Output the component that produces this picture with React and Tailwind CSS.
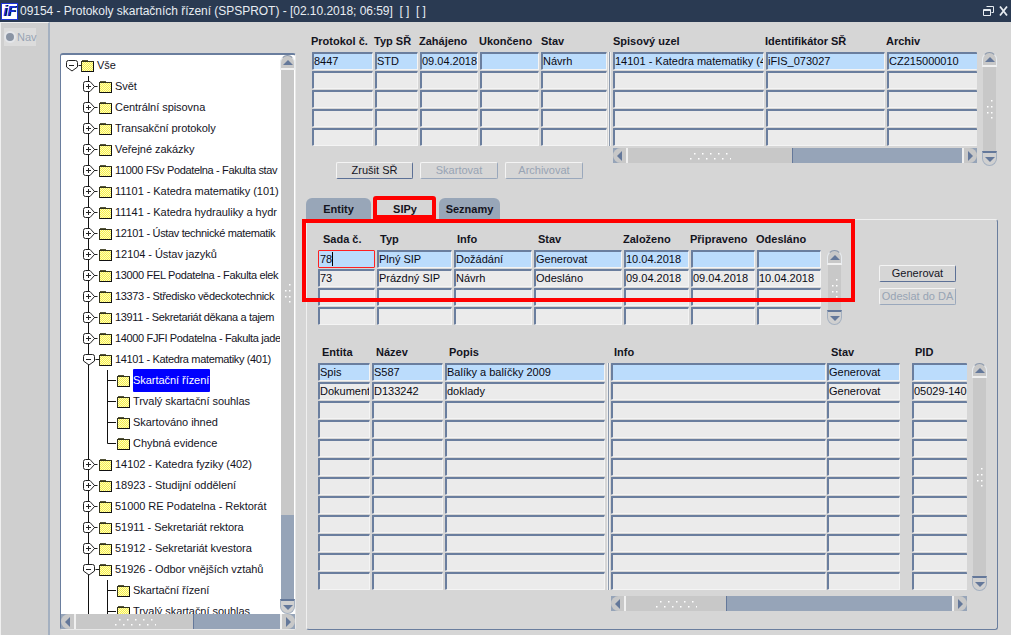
import React from 'react';

const treeRows = [
  { level: 0, state: 'open', label: 'Vše' },
  { level: 1, state: 'closed', label: 'Svět' },
  { level: 1, state: 'closed', label: 'Centrální spisovna' },
  { level: 1, state: 'closed', label: 'Transakční protokoly' },
  { level: 1, state: 'closed', label: 'Veřejné zakázky' },
  { level: 1, state: 'closed', label: '11000 FSv Podatelna - Fakulta stav', tight: true },
  { level: 1, state: 'closed', label: '11101 - Katedra matematiky (101)' },
  { level: 1, state: 'closed', label: '11141 - Katedra hydrauliky a hydr' },
  { level: 1, state: 'closed', label: '12101 - Ústav technické matematik', tight: true },
  { level: 1, state: 'closed', label: '12104 - Ústav jazyků' },
  { level: 1, state: 'closed', label: '13000 FEL Podatelna - Fakulta elek', tight: true },
  { level: 1, state: 'closed', label: '13373 - Středisko vědeckotechnick', tight: true },
  { level: 1, state: 'closed', label: '13911 - Sekretariát děkana a tajem', tight: true },
  { level: 1, state: 'closed', label: '14000 FJFI Podatelna - Fakulta jade', tight: true },
  { level: 1, state: 'open', label: '14101 - Katedra matematiky (401)', tight: true },
  { level: 2, label: 'Skartační řízení', selected: true },
  { level: 2, label: 'Trvalý skartační souhlas' },
  { level: 2, label: 'Skartováno ihned' },
  { level: 2, label: 'Chybná evidence', last: true },
  { level: 1, state: 'closed', label: '14102 - Katedra fyziky (402)' },
  { level: 1, state: 'closed', label: '18923 - Studijní oddělení' },
  { level: 1, state: 'closed', label: '51000 RE Podatelna - Rektorát' },
  { level: 1, state: 'closed', label: '51911 - Sekretariát rektora' },
  { level: 1, state: 'closed', label: '51912 - Sekretariát kvestora' },
  { level: 1, state: 'open', label: '51926 - Odbor vnějších vztahů' },
  { level: 2, label: 'Skartační řízení' },
  { level: 2, label: 'Trvalý skartační souhlas' },
];

const Folder = ({ x }) => (
  <g transform={`translate(${x} 4)`} shapeRendering="crispEdges">
    <path d="M1 1h5v1h6v2H1z" fill="#f2e840" stroke="#55553a" strokeWidth="1" />
    <rect x=".5" y="2.5" width="12" height="9.5" fill="#f4ea3a" stroke="#33331a" strokeWidth="1" />
    <rect x="1" y="3" width="11" height="8.5" fill="url(#dither)" />
    <path d="M12.5 3v9.5H1" fill="none" stroke="#111" strokeWidth="1.4" />
  </g>
);

const Node = ({ x, open }) => (
  <g fill="#fff" stroke="#222" strokeWidth="1">
    {open ? (
      <path d={`M${x + 0.5} 7.5q0-2 2-2h7q2 0 2 2v4.5l-5.5 4-5.5-4z`} />
    ) : (
      <path d={`M${x + 0.5} 7.5q0-2 2-2h4.5l4.5 5-4.5 5h-4.5q-2 0-2-2z`} />
    )}
    <path d={`M${x + 3} 10.5h5`} fill="none" />
    {!open && <path d={`M${x + 5.5} 8v5`} fill="none" />}
    <path d={`M${x + (open ? 12.5 : 11)} 10.5h3.5`} fill="none" />
  </g>
);

// tree lines + folder are one small drawing per row
const TreeGlyph = ({ row }) => {
  const w = row.level === 0 ? 36 : row.level === 1 ? 54 : 72;
  return (
    <svg width={w} height="21" className="shrink-0">
      <defs>
        <pattern id="dither" width="2" height="2" patternUnits="userSpaceOnUse">
          <rect width="2" height="2" fill="#f6f04a" />
          <rect width="1" height="1" fill="#fffcc0" />
          <rect x="1" y="1" width="1" height="1" fill="#fffcc0" />
        </pattern>
      </defs>
      {row.level > 0 && <path d="M27.5 0v21" stroke="#111" />}
      {row.level === 0 && <Node x={5} open />}
      {row.level === 0 && <Folder x={20} />}
      {row.level === 1 && <Node x={22} open={row.state === 'open'} />}
      {row.level === 1 && <Folder x={38} />}
      {row.level === 2 && (
        <path d={`M46.5 0V${row.last ? 10.5 : 21}M46.5 10.5H55`} stroke="#111" fill="none" />
      )}
      {row.level === 2 && <Folder x={56} />}
    </svg>
  );
};

const Dots = ({ vertical }) => (
  <svg width={vertical ? 8 : 42} height={vertical ? 20 : 8} className="shrink-0">
    {(vertical
      ? [[5, 1], [1, 7], [5, 7], [1, 13], [5, 13], [5, 18]]
      : [[5, 1], [13, 1], [21, 1], [29, 1], [37, 1], [1, 6], [9, 6], [17, 6], [25, 6], [33, 6], [41, 6]]
    ).map(([x, y], i) => (
      <rect key={i} x={x} y={y} width="1.5" height="1.5" fill="#fff" />
    ))}
  </svg>
);

const VScroll = ({ thumbClass = 'flex-1', track }) => (
  <div className="flex h-full w-[15px] shrink-0 flex-col">
    <div className="flex h-[15px] shrink-0 items-center justify-center rounded-t-[8px] border border-b-2 border-[#e8ecf0] border-t-[#8a98ac] border-b-[#f0f0f0] bg-[#c8c8c8]">
      <div className="h-0 w-0 border-x-[5px] border-b-[5px] border-x-transparent border-b-[#64789a]" />
    </div>
    <div className={`mx-px flex items-center justify-center bg-[#c8c8c8] ${thumbClass}`}>
      <Dots vertical />
    </div>
    {track && <div className="mx-px flex-1 bg-[#96a4b8]" />}
    <div className="flex h-[15px] shrink-0 items-center justify-center rounded-b-[8px] border border-t-2 border-[#a4b0c0] border-t-[#64789a] bg-[#d0d0d0]">
      <div className="h-0 w-0 border-x-[5px] border-t-[5px] border-x-transparent border-t-[#64789a]" />
    </div>
  </div>
);

const HScroll = ({ thumbClass }) => (
  <div className="flex h-[15px] w-full shrink-0 bg-[#96a4b8]">
    <div className="flex w-[15px] shrink-0 items-center justify-center rounded-l-full border-r-2 border-r-[#f0f0f0] bg-[#c8c8c8]">
      <div className="h-0 w-0 border-y-[5px] border-r-[5px] border-y-transparent border-r-[#64789a]" />
    </div>
    <div className={`flex items-center justify-center border-r border-r-[#64789a] bg-[#c8c8c8] ${thumbClass}`}>
      <Dots />
    </div>
    <div className="flex-1" />
    <div className="flex w-[15px] shrink-0 items-center justify-center rounded-r-full border-l-2 border-l-[#f0f0f0] bg-[#c8c8c8]">
      <div className="h-0 w-0 border-y-[5px] border-l-[5px] border-y-transparent border-l-[#64789a]" />
    </div>
  </div>
);

const Field = ({ value, active, focused, open }) => (
  <div
    className={`flex h-[18px] items-center overflow-hidden whitespace-nowrap rounded-[1px] text-[11px] text-[#0a0a14] ${
      focused
        ? 'border border-[#ff2020] pl-px'
        : 'border-t-2 border-l-2 border-b border-t-[#6a7e9e] border-l-[#6a7e9e] border-b-[#f4f4f4]'
    } ${open || focused ? '' : 'border-r border-r-[#f4f4f4]'} ${active ? 'bg-[#bbdcfc]' : 'bg-[#ebebeb]'}`}
  >
    {value}
    {focused && <span className="h-[14px] w-px bg-black" />}
  </div>
);

const Column = ({ className, label, labelClass = '', values = [], rows, open, focused }) => (
  <div className={`flex shrink-0 flex-col ${className}`}>
    <div className={`flex h-[22px] items-center whitespace-nowrap text-[11px] font-bold text-[#14141e] ${labelClass}`}>
      {label}
    </div>
    <div className="flex flex-col gap-px">
      {Array.from({ length: rows }).map((_, i) => (
        <Field key={i} value={values[i]} active={i === 0} open={open} focused={focused && i === 0} />
      ))}
    </div>
  </div>
);

const Divider = ({ className }) => (
  <div className={`w-[3px] shrink-0 border-x border-x-[#f0f0f0] bg-[#8a98ac] ${className}`} />
);

const Btn = ({ children, disabled, className }) => (
  <button
    className={`flex h-[17px] items-center justify-center whitespace-nowrap rounded-[2px] border border-t-[#f4f4f4] border-l-[#f4f4f4] text-[11px] ${
      disabled
        ? 'border-r-[#9aa8bc] border-b-[#9aa8bc] text-[#98a4b4]'
        : 'border-r-[#5c7096] border-b-[#5c7096] text-[#14141e]'
    } ${className}`}
  >
    {children}
  </button>
);

const Tab = ({ children, active, className }) => (
  <div
    className={`flex h-[21px] items-center justify-center rounded-t-[6px] pt-[2px] text-[11px] font-bold text-[#14141e] ${
      active ? 'relative bg-[#d6d6d6]' : 'bg-[#98a6b8]'
    } ${className}`}
  >
    {children}
    {active && (
      <span className="absolute -left-[2px] -right-[1px] -top-[2px] bottom-0 rounded-t-[3px] border-4 border-[#ff0000]" />
    )}
  </div>
);

const Tree = () => (
  <div className="flex h-[577px] w-[236px] shrink-0 flex-col rounded-[3px] border border-t-2 border-[#e8e8e8] border-t-[#6a7e9e] border-l-[#6a7e9e] bg-white">
    <div className="flex min-h-0 flex-1">
      <div className="min-w-0 flex-1 overflow-hidden">
        {treeRows.map((row, i) => (
          <div
            key={i}
            className={`flex h-[21px] items-center whitespace-nowrap text-[11px] text-[#14141e] ${
              row.tight ? 'tracking-[-0.35px]' : 'tracking-[-0.05px]'
            }`}
          >
            <TreeGlyph row={row} />
            <span className={row.selected ? 'rounded-[1px] bg-[#0000ff] py-[3px] pr-px text-white' : ''}>
              {row.label}
            </span>
          </div>
        ))}
      </div>
      <VScroll thumbClass="h-[445px]" track />
    </div>
    <HScroll thumbClass="w-[118px]" />
  </div>
);

const TopGrid = () => (
  <div className="flex pl-[10px] pt-[8px]">
    <div className="flex w-[295px] shrink-0 flex-col">
      <div className="flex gap-[2px]">
        <Column className="w-[61px]" label="Protokol č." labelClass="-ml-px" rows={5} values={['8447']} />
        <Column className="w-[43px]" label="Typ SŘ" labelClass="-ml-px" rows={5} values={['STD']} />
        <Column className="w-[58px]" label="Zahájeno" labelClass="-ml-px" rows={5} values={['09.04.2018']} />
        <Column className="w-[59px]" label="Ukončeno" labelClass="-ml-px" rows={5} />
        <Column className="w-[66px]" label="Stav" rows={5} values={['Návrh']} />
      </div>
      <div className="ml-[24px] mt-[16px] flex gap-[7px]">
        <Btn className="w-[77px]">Zrušit SŘ</Btn>
        <Btn className="w-[78px]" disabled>Skartovat</Btn>
        <Btn className="w-[78px]" disabled>Archivovat</Btn>
      </div>
    </div>
    <Divider className="ml-[1px] mr-[2px] mt-[22px] h-[94px]" />
    <div className="flex w-[364px] shrink-0 flex-col">
      <div className="flex gap-[2px]">
        <Column className="w-[151px]" label="Spisový uzel" rows={5} values={['14101 - Katedra matematiky (4']} />
        <Column className="w-[119px]" label="Identifikátor SŘ" labelClass="-ml-px" rows={5} values={['iFIS_073027']} />
        <Column className="w-[90px]" label="Archiv" labelClass="-ml-px" rows={5} open values={['CZ215000010']} />
      </div>
      <div className="mt-[2px]">
        <HScroll thumbClass="w-[165px]" />
      </div>
    </div>
    <div className="ml-[5px] mt-[22px] h-[114px]">
      <VScroll />
    </div>
  </div>
);

const SipGrid = () => (
  <div className="flex">
    <div className="flex gap-[2px]">
      <Column className="w-[57px]" label="Sada č." labelClass="pl-[5px]" rows={4} focused values={['78', '73']} />
      <Column className="w-[75px]" label="Typ" labelClass="pl-[3px]" rows={4} values={['Plný SIP', 'Prázdný SIP']} />
      <Column className="w-[78px]" label="Info" labelClass="pl-[3px]" rows={4} values={['Dožádání', 'Návrh']} />
      <Column className="w-[88px]" label="Stav" labelClass="pl-[4px]" rows={4} values={['Generovat', 'Odesláno']} />
      <Column className="w-[65px]" label="Založeno" labelClass="-ml-px" rows={4} values={['10.04.2018', '09.04.2018']} />
      <Column className="w-[64px]" label="Připraveno" labelClass="-ml-px" rows={4} values={['', '09.04.2018']} />
      <Column className="w-[64px]" label="Odesláno" labelClass="-ml-px" rows={4} values={['', '10.04.2018']} />
    </div>
    <div className="ml-[6px] mt-[22px] h-[75px]">
      <VScroll />
    </div>
    <div className="ml-[37px] mt-[37px] flex w-[77px] flex-col gap-[6px]">
      <Btn className="w-full">Generovat</Btn>
      <Btn className="w-full" disabled>Odeslat do DA</Btn>
    </div>
  </div>
);

const EntityGrid = () => (
  <div className="mt-[16px] flex">
    <div className="flex gap-[2px]">
      <Column className="w-[52px]" label="Entita" labelClass="pl-[4px]" rows={12} values={['Spis', 'Dokument']} />
      <Column className="w-[71px]" label="Název" labelClass="pl-[4px]" rows={12} values={['S587', 'D133242']} />
      <Column className="w-[160px]" label="Popis" labelClass="pl-[4px]" rows={12} values={['Balíky a balíčky 2009', 'doklady']} />
    </div>
    <Divider className="ml-[2px] mr-[1px] mt-[22px] h-[227px]" />
    <div className="flex w-[356px] shrink-0 flex-col">
      <div className="flex">
        <Column className="w-[215px]" label="Info" labelClass="pl-[3px]" rows={12} />
        <Column className="ml-[1px] w-[73px]" label="Stav" labelClass="pl-[4px]" rows={12} values={['Generovat', 'Generovat']} />
        <Column className="ml-[12px] w-[55px]" label="PID" labelClass="pl-[3px]" rows={12} open values={['', '05029-140']} />
      </div>
      <div className="mt-[6px]">
        <HScroll thumbClass="w-[101px]" />
      </div>
    </div>
    <div className="ml-[5px] mt-[22px] h-[228px]">
      <VScroll />
    </div>
  </div>
);

const RightPane = () => (
  <div className="relative w-[700px] shrink-0">
    <TopGrid />
    <div className="ml-[4px] mt-[19px] flex gap-[4px]">
      <Tab className="w-[65px]">Entity</Tab>
      <Tab className="w-[60px]" active>SIPy</Tab>
      <Tab className="w-[61px]">Seznamy</Tab>
    </div>
    <div className="ml-[4px] h-[411px] w-[692px] rounded-[3px] border border-t-[#f0f0f0] border-l-[#f0f0f0] border-r-[#6a7e9e] border-b-[#6a7e9e] pl-[11px] pt-[8px]">
      <SipGrid />
      <EntityGrid />
    </div>
    {/* red highlight drawn over the screenshot */}
    <div className="pointer-events-none absolute left-0 top-[197px] h-[83px] w-[553px] border-4 border-[#ff0000]" />
  </div>
);

export default function App() {
  return (
    <div className="flex h-[635px] w-[1011px] flex-col overflow-hidden bg-[#d6d6d6] font-['Liberation_Sans',Arial,sans-serif]">
      <header className="flex h-[22px] shrink-0 items-center bg-[#2a3a52] pl-px pr-[2px]">
        <div className="flex h-[17px] w-[17px] items-center justify-center border border-[#1c34d8] bg-white text-[14px] font-bold italic leading-none text-[#1530e0] [text-shadow:1px_0_0_#000]">
          iF
        </div>
        <span className="ml-[2px] flex-1 whitespace-pre text-[12px] tracking-[-0.03px] text-[#e8edf2]">
          09154 - Protokoly skartačních řízení (SPSPROT) - [02.10.2018; 06:59]  [ ]  [ ]
        </span>
        <svg width="26" height="12" viewBox="0 0 26 12" fill="none" stroke="#e8edf2" strokeWidth="1">
          <path d="M3.5 1.5h7v6h-2M.5 4.5h7v6h-7zM.5 5.5h7" />
          <path d="M17 1.5l7 9M24 1.5l-7 9" strokeWidth="1.8" />
        </svg>
      </header>

      <div className="flex min-h-0 flex-1">
        <aside className="h-full w-[50px] shrink-0 border-t border-l border-r-2 border-t-[#f0f0f0] border-l-[#f0f0f0] border-r-[#a4b0c0] bg-[#cfcfcf] pl-[3px] pt-[5px]">
          <div className="flex h-[18px] w-[32px] items-center bg-[#dcdcdc] text-[11px] text-[#98a4b4]">
            <span className="h-[12px] w-[12px] shrink-0 rounded-full border-2 border-[#e4e6ea] bg-[#8a94a4]" />
            <span className="ml-px">Nav</span>
          </div>
        </aside>

        <div className="flex min-w-0 flex-1 items-start gap-[6px] pl-[10px]">
          <div className="pt-[31px]">
            <Tree />
          </div>
          <RightPane />
        </div>
      </div>
    </div>
  );
}
